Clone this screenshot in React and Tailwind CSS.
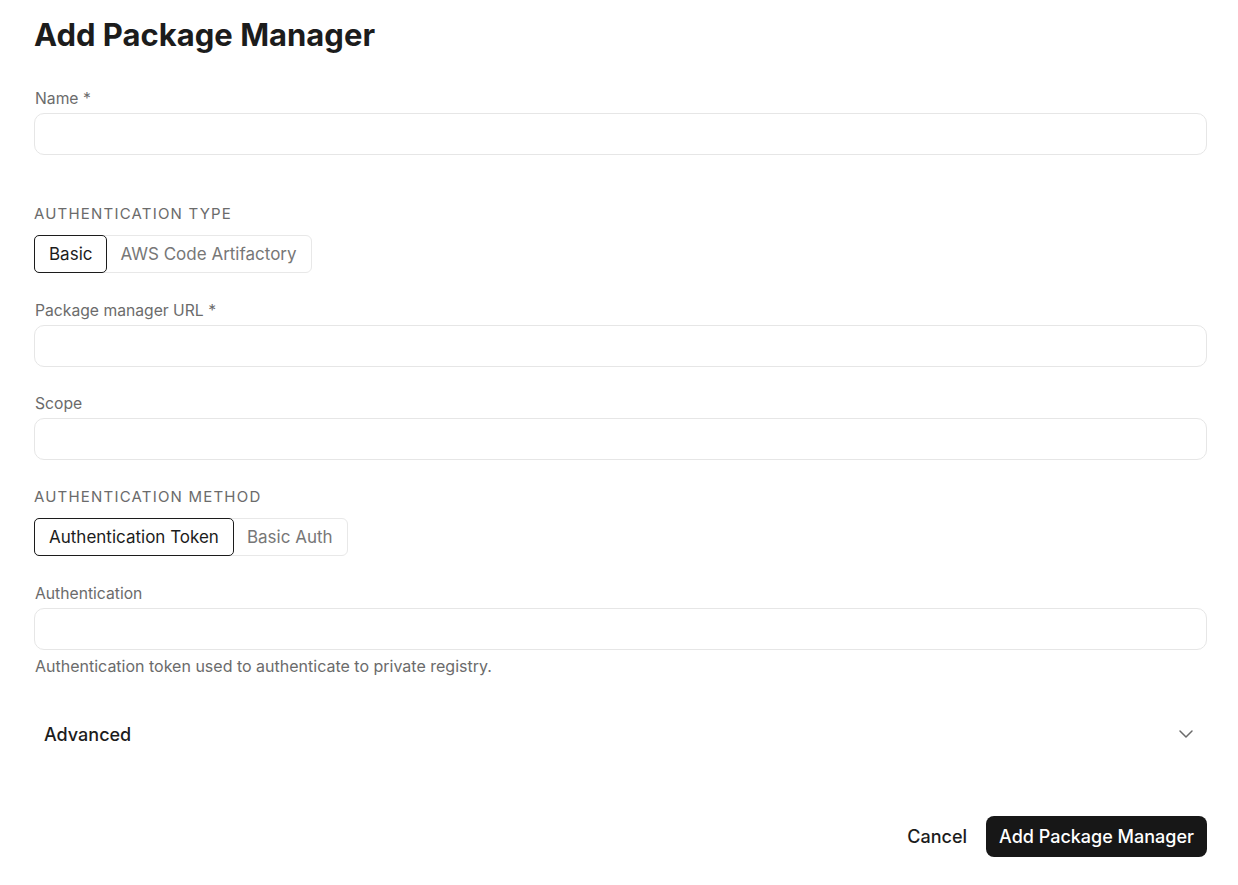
import React, { useState } from "react";

const font = { fontFamily: "Inter, 'Noto Sans', sans-serif" };

const Field = ({ label, help }) => (
  <div className="flex flex-col">
    <label className="text-[15.7px] leading-6 text-[#6b6b6b] pl-px">{label}</label>
    <input
      type="text"
      className="mt-[2px] h-[42px] w-full rounded-[10px] border border-[#e6e6e6] bg-white px-3 outline-none"
    />
    {help && (
      <p className="mt-[4px] text-[16px] leading-6 text-[#6b6b6b] pl-px">{help}</p>
    )}
  </div>
);

const Segmented = ({ options, value, onChange }) => (
  <div className="flex w-fit rounded-[6px] border border-[#e8e8e8]">
    {options.map((opt) => (
      <button
        key={opt}
        onClick={() => onChange(opt)}
        className={
          value === opt
            ? "-m-px h-[38px] rounded-[5px] border border-[#1c1c1c] px-[14px] pt-[2px] text-[17px] text-[#1c1c1c]"
            : "h-[36px] px-[14px] pt-[2px] text-[17px] text-[#777777]"
        }
      >
        {opt}
      </button>
    ))}
  </div>
);

const App = () => {
  const [authType, setAuthType] = useState("Basic");
  const [authMethod, setAuthMethod] = useState("Authentication Token");

  return (
    <div className="min-h-screen bg-white pl-[34px] pr-[31px] pt-[17px]" style={font}>
      <h1 className="text-[31px] font-bold leading-9 text-[#1c1c1c]">Add Package Manager</h1>

      <div className="mt-[34px]">
        <Field label="Name *" />
      </div>

      <div className="mt-[49px] text-[15px] leading-5 uppercase tracking-[0.08em] text-[#6b6b6b]">
        Authentication Type
      </div>
      <div className="mt-[11px]">
        <Segmented
          options={["Basic", "AWS Code Artifactory"]}
          value={authType}
          onChange={setAuthType}
        />
      </div>

      <div className="mt-[26px]">
        <Field label="Package manager URL *" />
      </div>
      <div className="mt-[25px]">
        <Field label="Scope" />
      </div>

      <div className="mt-[27px] text-[15px] leading-5 uppercase tracking-[0.08em] text-[#6b6b6b]">
        Authentication Method
      </div>
      <div className="mt-[11px]">
        <Segmented
          options={["Authentication Token", "Basic Auth"]}
          value={authMethod}
          onChange={setAuthMethod}
        />
      </div>

      <div className="mt-[26px]">
        <Field
          label="Authentication"
          help="Authentication token used to authenticate to private registry."
        />
      </div>

      <button className="mt-[32px] flex h-[48px] w-full items-center justify-between pl-[10px] pr-[9px]">
        <span className="text-[18px] font-medium text-[#1c1c1c]">Advanced</span>
        <svg width="24" height="24" viewBox="0 0 24 24" fill="none" stroke="#6b6b6b" strokeWidth="1.5" strokeLinecap="round" strokeLinejoin="round">
          <path d="m6 9 6 6 6-6" />
        </svg>
      </button>

      <div className="mt-[58px] flex items-center justify-end gap-[19px]">
        <button className="text-[18px] font-medium text-[#1c1c1c]">Cancel</button>
        <button className="h-[41px] rounded-[8px] bg-[#171717] px-[13px] text-[18px] font-medium text-white">
          Add Package Manager
        </button>
      </div>
    </div>
  );
};

export default App;
